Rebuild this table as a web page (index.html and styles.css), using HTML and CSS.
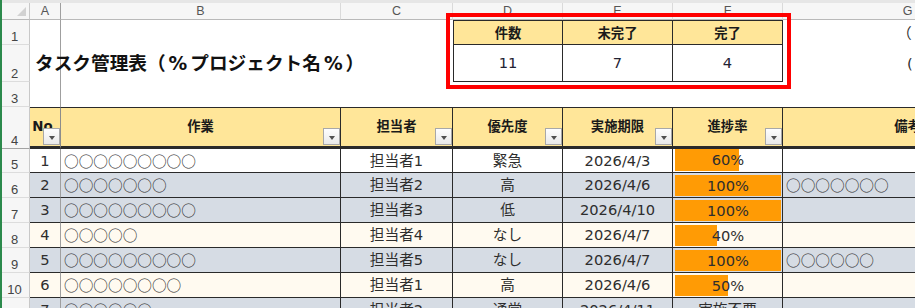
FILE: index.html
```html
<!DOCTYPE html>
<html lang="ja">
<head>
<meta charset="utf-8">
<title>タスク管理表</title>
<link rel="stylesheet" href="styles.css">
</head>
<body>
<div class="sheet">
  <div class="band"></div>
  <div class="row colhdr">
    <div class="ch corner"><span class="tri"></span></div>
    <div class="ch fa">A</div>
    <div class="ch">B</div>
    <div class="ch">C</div>
    <div class="ch">D</div>
    <div class="ch">E</div>
    <div class="ch">F</div>
    <div class="ch">G</div>
  </div>

  <div class="row r1">
    <div class="rh">1</div>
    <div class="c fa"></div>
    <div class="c"></div>
    <div class="c"></div>
    <div class="c t th sl st">件数</div>
    <div class="c t th st">未完了</div>
    <div class="c t th st">完了</div>
    <div class="c left g1">（</div>
  </div>

  <div class="row r2">
    <div class="rh">2</div>
    <div class="c fa left"><h1 class="title">タスク管理表（<span class="pc">%</span>プロジェクト名<span class="pc">%</span>）</h1></div>
    <div class="c"></div>
    <div class="c"></div>
    <div class="c t num sl">11</div>
    <div class="c t num">7</div>
    <div class="c t num">4</div>
    <div class="c left g2">(</div>
  </div>

  <div class="row r3">
    <div class="rh">3</div>
    <div class="c fa"></div>
    <div class="c"></div>
    <div class="c"></div>
    <div class="c"></div>
    <div class="c"></div>
    <div class="c"></div>
    <div class="c"></div>
  </div>

  <div class="row r4">
    <div class="rh">4</div>
    <div class="c h fa">No.<span class="fb"></span></div>
    <div class="c h t">作業<span class="fb"></span></div>
    <div class="c h t">担当者<span class="fb"></span></div>
    <div class="c h t">優先度<span class="fb"></span></div>
    <div class="c h t">実施期限<span class="fb"></span></div>
    <div class="c h t">進捗率<span class="fb"></span></div>
    <div class="c h t">備考</div>
  </div>

  <div class="row d r5 white">
    <div class="rh">5</div>
    <div class="c fa">1</div>
    <div class="c t left maru">○○○○○○○○○</div>
    <div class="c t">担当者1</div>
    <div class="c t">緊急</div>
    <div class="c t">2026/4/3</div>
    <div class="c t prog"><span class="bar" style="width:60%"></span><span class="pct">60%</span></div>
    <div class="c t left maru"></div>
  </div>

  <div class="row d gray">
    <div class="rh">6</div>
    <div class="c fa">2</div>
    <div class="c t left maru">○○○○○○○</div>
    <div class="c t">担当者2</div>
    <div class="c t">高</div>
    <div class="c t">2026/4/6</div>
    <div class="c t prog"><span class="bar" style="width:100%"></span><span class="pct">100%</span></div>
    <div class="c t left maru">○○○○○○○</div>
  </div>

  <div class="row d gray">
    <div class="rh">7</div>
    <div class="c fa">3</div>
    <div class="c t left maru">○○○○○○○○○</div>
    <div class="c t">担当者3</div>
    <div class="c t">低</div>
    <div class="c t">2026/4/10</div>
    <div class="c t prog"><span class="bar" style="width:100%"></span><span class="pct">100%</span></div>
    <div class="c t left maru"></div>
  </div>

  <div class="row d cream">
    <div class="rh">8</div>
    <div class="c fa">4</div>
    <div class="c t left maru">○○○○○</div>
    <div class="c t">担当者4</div>
    <div class="c t">なし</div>
    <div class="c t">2026/4/7</div>
    <div class="c t prog"><span class="bar" style="width:40%"></span><span class="pct">40%</span></div>
    <div class="c t left maru"></div>
  </div>

  <div class="row d gray">
    <div class="rh">9</div>
    <div class="c fa">5</div>
    <div class="c t left maru">○○○○○○○○○</div>
    <div class="c t">担当者5</div>
    <div class="c t">なし</div>
    <div class="c t">2026/4/7</div>
    <div class="c t prog"><span class="bar" style="width:100%"></span><span class="pct">100%</span></div>
    <div class="c t left maru">○○○○○○</div>
  </div>

  <div class="row d cream">
    <div class="rh">10</div>
    <div class="c fa">6</div>
    <div class="c t left maru">○○○○○○○○</div>
    <div class="c t">担当者1</div>
    <div class="c t">高</div>
    <div class="c t">2026/4/6</div>
    <div class="c t prog"><span class="bar" style="width:50%"></span><span class="pct">50%</span></div>
    <div class="c t left maru"></div>
  </div>

  <div class="row d gray">
    <div class="rh">11</div>
    <div class="c fa">7</div>
    <div class="c t left maru">○○○○○○</div>
    <div class="c t">担当者2</div>
    <div class="c t">通常</div>
    <div class="c t">2026/4/11</div>
    <div class="c t">実施不要</div>
    <div class="c t left maru"></div>
  </div>

  <div class="mark"></div>
</div>
</body>
</html>
```

FILE: styles.css
```css
* { box-sizing: border-box; margin: 0; padding: 0; }
html, body { width: 915px; height: 308px; overflow: hidden; background: #fff; }
body {
  font-family: "DejaVu Sans", "Noto Sans CJK JP", sans-serif;
  color: #2e2e2e;
}
.sheet {
  position: relative;
  width: 1035px;
  border-left: 2px solid #2c8a4c;
}
.band { height: 3px; background: #e6e6e6; }
.row {
  display: grid;
  grid-template-columns: 28px 31px 280px 112px 110px 110px 110px 250px;
}

/* column header */
.colhdr { height: 17px; }
.ch {
  background: #f6f6f6;
  border-right: 1px solid #dadada;
  border-bottom: 1px solid #b9b9b9;
  font: 12.5px/16px "Liberation Sans", "DejaVu Sans", sans-serif;
  color: #555;
  text-align: center;
}
.ch.fa { border-right-color: #9f9f9f; }
.corner {
  display: flex;
  align-items: flex-end;
  justify-content: flex-end;
  padding: 0 3px 3px 0;
  border-right-color: #c8c8c8;
}
.tri {
  width: 0; height: 0;
  border-left: 9px solid transparent;
  border-bottom: 9px solid #d2d2d2;
}

/* row header */
.rh {
  background: #f6f6f6;
  border-right: 1px solid #c8c8c8;
  border-bottom: 1px solid #dcdcdc;
  display: flex;
  align-items: flex-end;
  justify-content: center;
  font: 13px/13px "Liberation Sans", "DejaVu Sans", sans-serif;
  color: #444;
  padding: 0 2px 1px 0;
}
.r4 .rh { border-bottom-color: #a3a3a3; }

/* row heights */
.r1 { height: 25px; }
.r2 { height: 37px; }
.r3 { height: 25px; }
.r4 { height: 42px; }
.d { height: 25px; }
.r5 { height: 24px; }

/* cells */
.c {
  display: flex;
  align-items: center;
  justify-content: center;
  font-size: 14.67px;
  line-height: 18px;
  white-space: nowrap;
  min-width: 0;
}
.left { justify-content: flex-start; padding-left: 3px; }
.fa { border-right: 1px solid #9f9f9f; }
.t {
  border-right: 1px solid #2a2a2a;
  border-bottom: 1px solid #2a2a2a;
}
.sl { border-left: 1px solid #2a2a2a; }
.st { border-top: 1px solid #2a2a2a; }
.th {
  background: #ffe699;
  font-weight: bold;
  font-size: 13.33px;
  font-family: "Noto Sans CJK JP", sans-serif;
  color: #1a1a1a;
}
.num { font-size: 14.67px; color: #1f2233; }

.title {
  font-size: 18.67px;
  font-weight: bold;
  line-height: 24px;
  color: #111;
  padding-left: 2px;
  white-space: nowrap;
}
.pc { padding: 0 3px; }
.g1 { padding-left: 114px; font-family: "Noto Sans CJK JP", sans-serif; }
.g2 { padding-left: 124px; }

/* table header */
.h {
  position: relative;
  background: #ffe699;
  font-weight: bold;
  font-size: 13.33px;
  color: #1a1a1a;
  border-top: 1px solid #2a2a2a;
  border-bottom: 3px solid #2a2a2a;
}
.h.fa { border-right-color: #8c8c8c; }
.fb {
  position: absolute;
  right: 0;
  bottom: 1px;
  width: 17px;
  height: 17px;
  border: 1px solid #a8a8a8;
  background: linear-gradient(#fefefe, #e9e9e9);
  display: flex;
  align-items: center;
  justify-content: center;
}
.fb::after {
  content: "";
  width: 0; height: 0;
  border-left: 3.5px solid transparent;
  border-right: 3.5px solid transparent;
  border-top: 4px solid #505050;
  margin-top: 2px;
}

/* data rows */
.d .fa { border-bottom: 1px solid #2a2a2a; }
.white > .c { background: #fff; }
.gray > .c { background: #d6dce4; }
.cream > .c { background: #fffaf0; }
.maru { font-family: "Noto Sans CJK JP", sans-serif; }

.prog {
  display: grid;
  align-items: stretch;
  justify-content: stretch;
  padding: 2px 1px 1px 2px;
}
.r5 .prog { padding-top: 0; }
.bar, .pct { grid-area: 1 / 1; }
.bar { background: #ff9b05; justify-self: start; }
.pct { align-self: center; justify-self: center; }

/* annotation */
.mark {
  position: absolute;
  left: 444px;
  top: 13px;
  width: 345px;
  height: 76px;
  border: 4px solid #ff0000;
}
```
